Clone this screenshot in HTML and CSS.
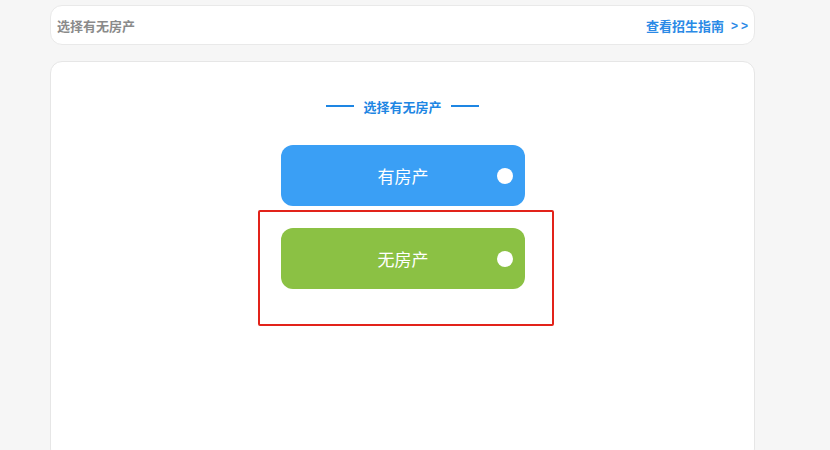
FILE: index.html
```html
<!DOCTYPE html>
<html lang="zh">
<head>
<meta charset="utf-8">
<link rel="stylesheet" href="styles.css">
</head>
<body>
<div class="page">
  <div class="topbar">
    <span class="topbar-title">选择有无房产</span>
    <a class="topbar-link">查看招生指南<span class="arrows">&gt;&gt;</span></a>
  </div>
  <div class="card">
    <div class="heading"><span class="line"></span><span class="heading-text">选择有无房产</span><span class="line"></span></div>
    <div class="option option-blue"><span class="option-text">有房产</span><span class="dot"></span></div>
    <div class="highlight">
      <div class="option option-green"><span class="option-text">无房产</span><span class="dot"></span></div>
    </div>
  </div>
</div>
</body>
</html>
```

FILE: styles.css
```css
html, body {
  margin: 0;
  padding: 0;
  background: #f6f6f6;
  font-family: "Noto Sans CJK SC", "Noto Sans", sans-serif;
  height: 450px;
  overflow: hidden;
}
.page {
  width: 705px;
  margin-left: 50px;
  padding-top: 5px;
  display: flex;
  flex-direction: column;
  gap: 16px;
}
.topbar {
  height: 40px;
  box-sizing: border-box;
  background: #fff;
  border: 1px solid #e9e9e9;
  border-radius: 12px;
  display: flex;
  align-items: center;
  justify-content: space-between;
  padding: 0 6px 0 6px;
}
.topbar-title {
  font-size: 13px;
  font-weight: bold;
  color: #8a8a8a;
}
.topbar-link {
  font-size: 13px;
  font-weight: bold;
  color: #2b8ae6;
  display: flex;
  align-items: center;
}
.arrows {
  margin-left: 7px;
  margin-right: -3px;
  padding-top: 2px;
  font-family: "Liberation Sans", sans-serif;
  font-weight: bold;
  font-size: 12px;
  letter-spacing: 3px;
}
.card {
  height: 400px;
  background: #fff;
  border: 1px solid #e6e6e6;
  border-radius: 12px;
  display: flex;
  flex-direction: column;
  align-items: center;
  padding-top: 34px;
  box-sizing: border-box;
}
.heading {
  display: flex;
  align-items: center;
  gap: 9px;
  height: 20px;
  color: #1e86e3;
  font-size: 13px;
  font-weight: bold;
}
.line {
  width: 28px;
  height: 2px;
  background: #1e86e3;
}
.option {
  width: 244px;
  height: 61px;
  border-radius: 12px;
  position: relative;
  display: flex;
  align-items: center;
  justify-content: center;
  color: #fff;
  font-size: 17px;
  box-sizing: border-box;
}
.option-blue {
  background: #3a9ff5;
  margin-top: 29px;
  margin-left: 1px;
}
.option-green {
  background: #8bc144;
}
.dot {
  position: absolute;
  right: 12px;
  top: 23px;
  width: 16px;
  height: 16px;
  border-radius: 50%;
  background: #fff;
}
.highlight {
  margin-top: 4px;
  border: 2px solid #e2231a;
  border-radius: 2px;
  padding: 16px 27px 35px 21px;
  margin-left: 7px;
}
```
